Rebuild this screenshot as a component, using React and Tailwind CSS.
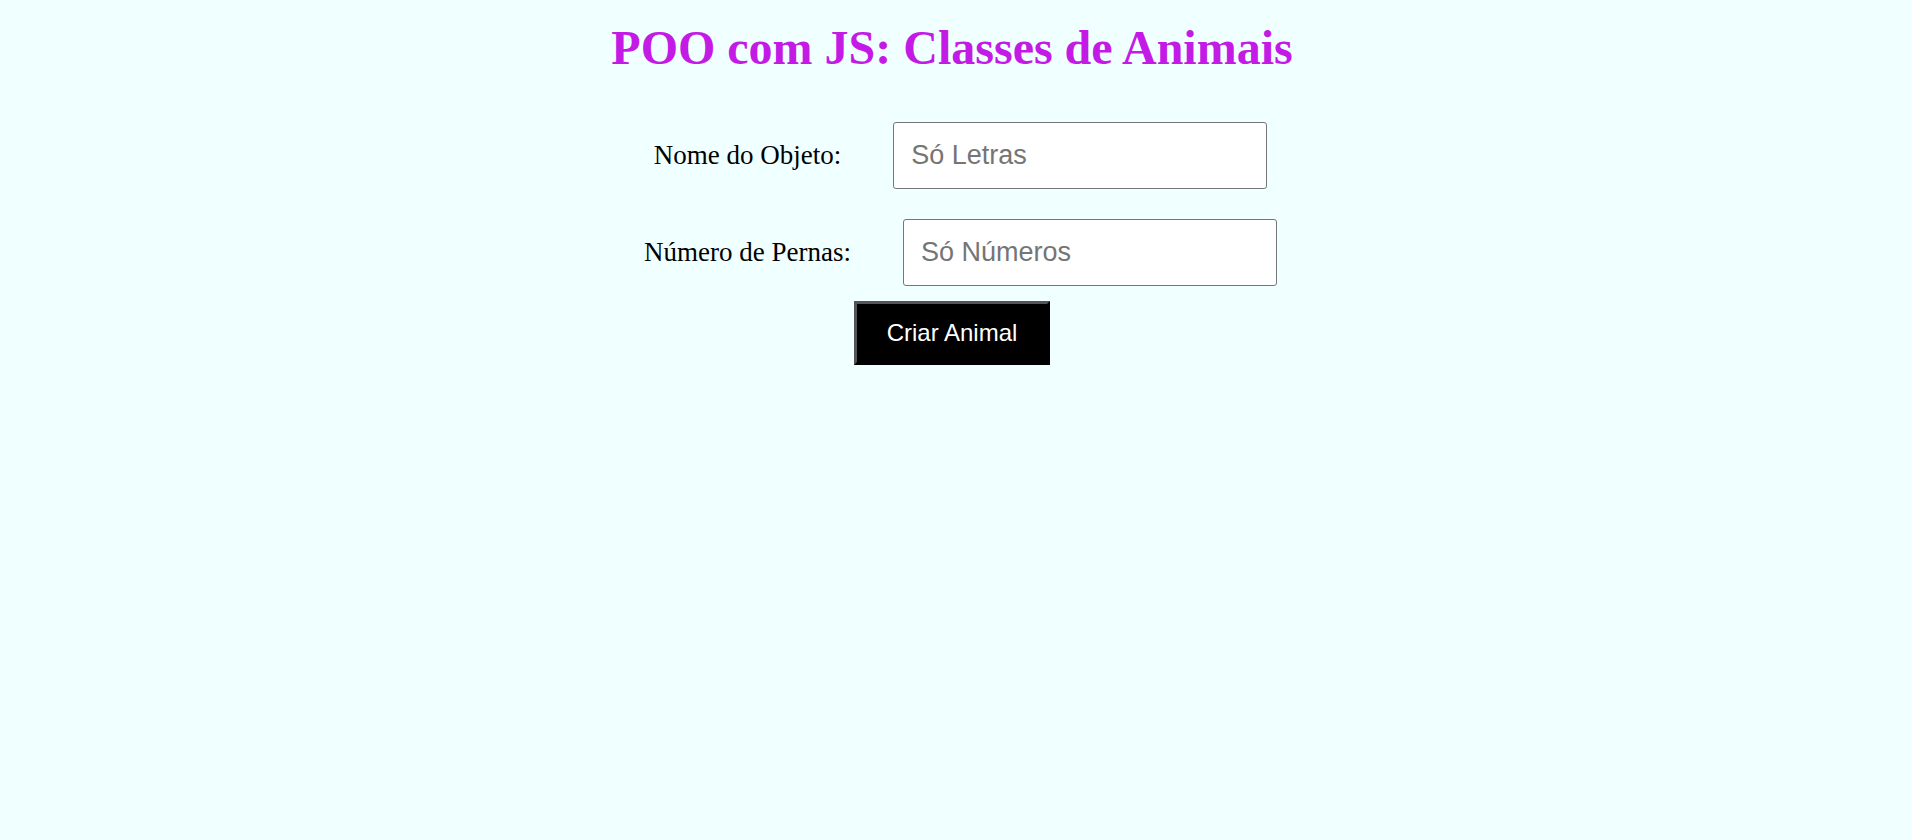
import React, { useState } from 'react';

export default function App() {
  const [nome, setNome] = useState('');
  const [pernas, setPernas] = useState('');

  const fields = [
    { label: 'Nome do Objeto:', placeholder: 'Só Letras', val: nome, set: setNome },
    { label: 'Número de Pernas:', placeholder: 'Só Números', val: pernas, set: setPernas },
  ];

  return (
    <div className="min-h-screen w-full bg-[#f0ffff] flex flex-col items-center font-['Liberation_Serif',serif]">
      {/* Header */}
      <h1 className="mt-[21px] mr-[8px] text-[48px] leading-[54px] font-bold text-[#c41ae6]">
        POO com JS: Classes de Animais
      </h1>

      {/* Form */}
      <div className="mt-[47px] flex flex-col items-center gap-[30px]">
        {fields.map((f) => (
          <div key={f.label} className="flex items-center justify-center gap-[52px] pl-[9px]">
            <label className="text-[27px] text-black">{f.label}</label>
            <input
              type="text"
              value={f.val}
              onChange={(e) => f.set(e.target.value)}
              placeholder={f.placeholder}
              className="w-[374px] h-[67px] px-[17px] bg-white border border-[#767676] rounded-[3px] text-[27px] font-['Liberation_Sans',Arial,sans-serif] text-black placeholder:text-[#757575] outline-none"
            />
          </div>
        ))}
      </div>

      <button className="mt-[15px] mr-[8px] w-[196px] h-[64px] bg-black text-white text-[24px] font-['Liberation_Sans',Arial,sans-serif] border-[3px] border-t-[#555555] border-l-[#555555] border-r-black border-b-black">
        Criar Animal
      </button>
    </div>
  );
}
